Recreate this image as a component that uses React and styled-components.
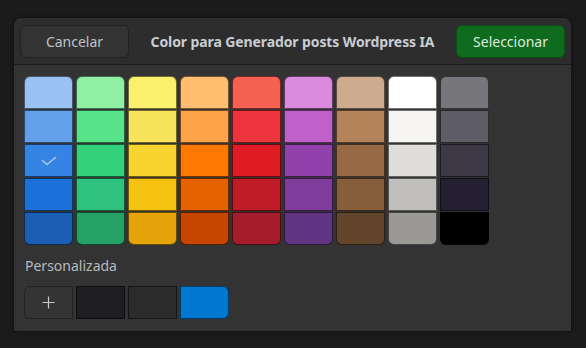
import React from "react";
import styled, { createGlobalStyle } from "styled-components";

const GlobalStyle = createGlobalStyle`
  html, body {
    margin: 0;
    padding: 0;
    background: #1c1c1c;
  }
  body {
    font-family: "Noto Sans", "DejaVu Sans", sans-serif;
    color: #d4d7da;
  }
`;

const palette = [
  ["#99c1f1", "#8ff0a4", "#f9f06b", "#ffbe6f", "#f66151", "#dc8add", "#cdab8f", "#ffffff", "#77767b"],
  ["#62a0ea", "#57e389", "#f8e45c", "#ffa348", "#ed333b", "#c061cb", "#b5835a", "#f6f5f4", "#5e5c64"],
  ["#3584e4", "#33d17a", "#f6d32d", "#ff7800", "#e01b24", "#9141ac", "#986a44", "#deddda", "#3d3846"],
  ["#1c71d8", "#2ec27e", "#f5c211", "#e66100", "#c01c28", "#813d9c", "#865e3c", "#c0bfbc", "#241f31"],
  ["#1a5fb4", "#26a269", "#e5a50a", "#c64600", "#a51d2d", "#613583", "#63452c", "#9a9996", "#000000"],
];

const customColors = ["#1e1e22", "#2b2b2b", "#0078cf"];

const Page = styled.div`
  padding: 17px 14px 16px 13px;
`;

const Dialog = styled.div`
  width: 559px;
  box-sizing: border-box;
  background: #333333;
  border: 1px solid #121212;
  border-radius: 9px 9px 0 0;
  box-shadow: 0 0 6px rgba(0, 0, 0, 0.35);
  overflow: hidden;
`;

const HeaderBar = styled.div`
  height: 46px;
  display: flex;
  align-items: center;
  padding: 0 6px 0 6px;
  background: #2d2d2d;
  border-bottom: 1px solid #1c1c1c;
`;

const HeaderButton = styled.button`
  width: 109px;
  height: 33px;
  border-radius: 6px;
  font-family: "Noto Sans", sans-serif;
  font-size: 14px;
  cursor: pointer;
  border: 1px solid ${(p) => (p.$suggested ? "#0b4f15" : "#222222")};
  background: ${(p) => (p.$suggested ? "#0f6c1f" : "#333333")};
  color: ${(p) => (p.$suggested ? "#dfe8df" : "#bfc3c7")};
`;

const Title = styled.div`
  flex: 1;
  text-align: center;
  font-size: 14px;
  font-weight: 700;
  color: #c9ced3;
  letter-spacing: -0.1px;
`;

const Body = styled.div`
  padding: 11px 10px 12px 10px;
`;

const SwatchGrid = styled.div`
  display: grid;
  grid-template-columns: repeat(9, 49px);
  grid-auto-rows: 33px;
  column-gap: 3px;
  row-gap: 1px;
`;

const Swatch = styled.div`
  box-sizing: border-box;
  border: 1px solid rgba(0, 0, 0, 0.55);
  background: ${(p) => p.$color};
  border-radius: ${(p) =>
    p.$top ? "6px 6px 0 0" : p.$bottom ? "0 0 6px 6px" : "0"};
  display: flex;
  align-items: center;
  justify-content: center;
`;

const Label = styled.div`
  margin: 12px 0 12px 1px;
  font-size: 14px;
  line-height: 17px;
  color: #b7babd;
`;

const CustomRow = styled.div`
  display: flex;
  gap: 3px;
  height: 33px;
`;

const AddButton = styled.div`
  width: 49px;
  box-sizing: border-box;
  border: 1px solid #222222;
  border-radius: 6px 0 0 6px;
  background: #343434;
  display: flex;
  align-items: center;
  justify-content: center;
`;

const CustomSwatch = styled.div`
  width: 49px;
  box-sizing: border-box;
  border: 1px solid rgba(0, 0, 0, 0.5);
  background: ${(p) => p.$color};
  border-radius: ${(p) => (p.$last ? "0 6px 6px 0" : "0")};
`;

function CheckIcon() {
  return (
    <svg width="16" height="10" viewBox="0 0 16 10">
      <polyline
        points="1.5,4.5 6,8.5 14.5,1.5"
        fill="none"
        stroke="rgba(255,255,255,0.55)"
        strokeWidth="1.6"
        strokeLinecap="round"
        strokeLinejoin="round"
      />
    </svg>
  );
}

function PlusIcon() {
  return (
    <svg width="13" height="13" viewBox="0 0 13 13">
      <path d="M6.5 0.5v12M0.5 6.5h12" stroke="#c8c8c8" strokeWidth="1.2" />
    </svg>
  );
}

export default function App() {
  return (
    <Page>
      <GlobalStyle />
      <Dialog>
        <HeaderBar>
          <HeaderButton>Cancelar</HeaderButton>
          <Title>Color para Generador posts Wordpress IA</Title>
          <HeaderButton $suggested>Seleccionar</HeaderButton>
        </HeaderBar>
        <Body>
          <SwatchGrid>
            {palette.map((row, r) =>
              row.map((color, c) => (
                <Swatch
                  key={`${r}-${c}`}
                  $color={color}
                  $top={r === 0}
                  $bottom={r === palette.length - 1}
                >
                  {r === 2 && c === 0 && <CheckIcon />}
                </Swatch>
              ))
            )}
          </SwatchGrid>
          <Label>Personalizada</Label>
          <CustomRow>
            <AddButton>
              <PlusIcon />
            </AddButton>
            {customColors.map((color, i) => (
              <CustomSwatch
                key={color}
                $color={color}
                $last={i === customColors.length - 1}
              />
            ))}
          </CustomRow>
        </Body>
      </Dialog>
    </Page>
  );
}
